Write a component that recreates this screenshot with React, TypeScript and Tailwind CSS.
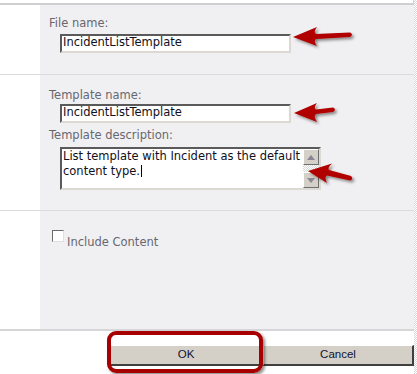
const label = 'text-[11.5px] leading-[13px] text-[#676770] font-["DejaVu_Sans",Verdana,sans-serif]'
const field =
  'border-2 border-t-[#5a5a5a] border-l-[#5a5a5a] border-b-[#dcd9d2] border-r-[#dcd9d2] bg-white text-[11.5px] leading-[13px] text-[#101020] font-["DejaVu_Sans",Verdana,sans-serif]'
const checker = 'bg-[repeating-conic-gradient(#d8d8d8_0_25%,#ffffff_0_50%)] bg-[length:2px_2px]'

function ScrollButton({ up }: { up?: boolean }) {
  return (
    <div className="flex h-[16px] w-[16px] items-center justify-center border border-t-white border-l-white border-b-[#6e6e6e] border-r-[#6e6e6e] bg-[#d4d0c8]">
      <svg width="8" height="5" viewBox="0 0 8 5">
        <path d={up ? 'M0 5 L4 0 L8 5 Z' : 'M0 0 L4 5 L8 0 Z'} fill="#8a8594" />
      </svg>
    </div>
  )
}

function Section({ h, children }: { h: string; children: React.ReactNode }) {
  return (
    <div className={`flex ${h}`}>
      <div className="w-[40px] bg-white" />
      <div className="flex flex-1 flex-col bg-[#f0f0f2] pl-[9px]">{children}</div>
    </div>
  )
}

function Arrows() {
  return (
    <svg className="pointer-events-none absolute left-0 top-0" width="417" height="374" viewBox="0 0 417 374">
      <defs>
        <filter id="sh" x="-20%" y="-40%" width="150%" height="200%">
          <feDropShadow dx="2" dy="2" stdDeviation="1.6" floodColor="#000" floodOpacity="0.45" />
        </filter>
      </defs>
      <g fill="#b00000" filter="url(#sh)">
        <path d="M293 37 L317 27 Q313 32 316 34 L350 32.5 Q354 34.5 350 37 L316 39 Q313 41 317 46 Z" />
        <path d="M294 113 L317 103 Q313 108 316 109.5 L333 107.5 Q337 109.5 333 112 L316 114 Q313 116 317 122 Z" />
        <path d="M308 171 L332 163.5 Q327 168 329 170 L351 176 Q354 179 350 180.5 L327 175.5 Q324 177 327 183 Z" />
      </g>
    </svg>
  )
}

export default function App() {
  return (
    <div className="relative flex h-[374px] w-[417px] overflow-hidden bg-white">
      <div className="flex w-[414px] flex-col">
        <div className="h-[5px] border-b-2 border-r border-[#cfcfd2]" />

        <Section h="h-[69px]">
          <div className={`${label} mt-[12px]`}>File name:</div>
          <div className={`${field} ml-[11px] mt-[4px] h-[19px] w-[231px] px-[1px]`}>IncidentListTemplate</div>
        </Section>
        <div className="h-px bg-[#dcdcde]" />

        <Section h="h-[135px]">
          <div className={`${label} mt-[14px]`}>Template name:</div>
          <div className={`${field} ml-[11px] mt-[2px] h-[19px] w-[231px] px-[1px]`}>IncidentListTemplate</div>
          <div className={`${label} mt-[6px]`}>Template description:</div>
          <div className={`${field} ml-[11px] mt-[5px] flex h-[43px] w-[261px]`}>
            <div className="flex-1 pl-[1px] pt-[1px]">
              List template with Incident as the default
              <br />
              content type.<span className="ml-px inline-block h-[12px] w-px translate-y-[2px] bg-black" />
            </div>
            <div className="flex w-[16px] flex-col">
              <ScrollButton up />
              <div className={`flex-1 ${checker}`} />
              <ScrollButton />
            </div>
          </div>
        </Section>
        <div className="h-px bg-[#dcdcde]" />

        <Section h="h-[118px]">
          <div className="ml-[3px] mt-[18px] flex items-end gap-[3px]">
            <div className="h-[12px] w-[12px] border border-t-[#6b6b6b] border-l-[#6b6b6b] border-b-[#e0e0e0] border-r-[#e0e0e0] bg-white" />
            <span className={`${label} translate-y-[7px]`}>Include Content</span>
          </div>
        </Section>
        <div className="h-[2px] bg-[#d6d6d8]" />

        <div className="flex pl-[110px] pt-[14px]">
          <button className="h-[21px] w-[153px] border border-t-white border-l-white border-b-2 border-r-2 border-b-[#404040] border-r-[#404040] bg-[#d4d0c8] font-['Liberation_Sans',Arial,sans-serif] text-[11.5px] font-normal text-[#101030]">
            OK
          </button>
          <button className="h-[21px] w-[151px] border border-t-white border-l-white border-b-2 border-r-2 border-b-[#404040] border-r-[#404040] bg-[#d4d0c8] font-['Liberation_Sans',Arial,sans-serif] text-[11.5px] font-normal text-[#101030]">
            Cancel
          </button>
        </div>
      </div>
      <div className={`flex-1 ${checker}`} />

      <div className="pointer-events-none absolute left-[107px] top-[331px] h-[42px] w-[156px] rounded-[9px] border-[4px] border-[#a80000] shadow-[2px_2px_3px_rgba(0,0,0,0.45)]" />
      <Arrows />
    </div>
  )
}
